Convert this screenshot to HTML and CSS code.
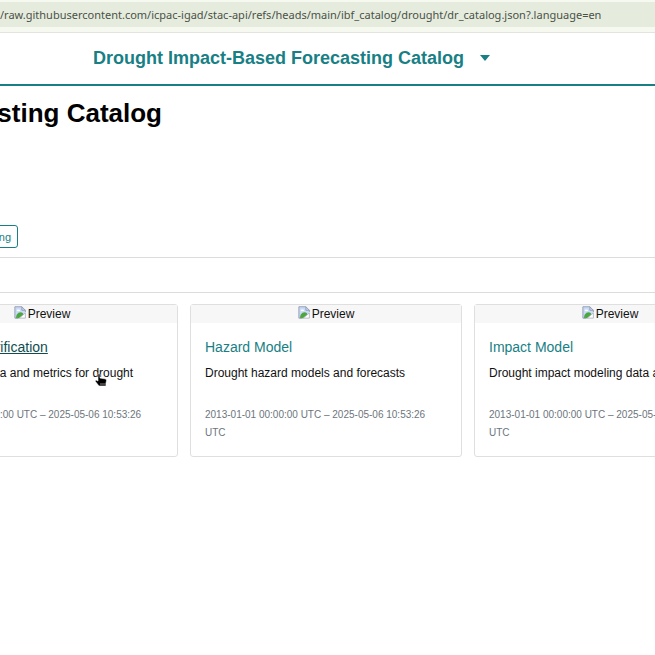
FILE: index.html
```
<!DOCTYPE html>
<html lang="en">
<head>
	<meta charset="utf-8">
	<title>Drought Impact-Based Forecasting Catalog</title>
	<link rel="stylesheet" href="styles.css">
</head>
<body>
	<svg class="defs" width="0" height="0">
		<symbol id="broken" viewBox="0 0 16 16">
			<path d="M1 2H9L13 6V9L6 15H1Z" fill="#c9dafa"/>
			<path d="M2 15L3 11Q6 7 10 9L11 11L6 15Z" fill="#4ca83e"/>
			<ellipse cx="5" cy="6" rx="2" ry="1" fill="#fff"/>
			<path d="M1 15V2H9L13 6V8M1 15H5M9 2V6H13" fill="none" stroke="#8f98a8"/>
			<path d="M13 9L6 15H13Z" fill="#fff" stroke="#b0b6c0"/>
		</symbol>
	</svg>

	<div class="toolbar">
		<input class="address" type="text" aria-label="Address" value="/raw.githubusercontent.com/icpac-igad/stac-api/refs/heads/main/ibf_catalog/drought/dr_catalog.json?.language=en">
	</div>

	<header>
		<a class="brand" href="#">Drought Impact-Based Forecasting Catalog</a>
		<button class="toggle" type="button" aria-label="More"><svg width="10" height="6" viewBox="0 0 10 6"><path d="M0 0H10L5 6Z" fill="currentColor"/></svg></button>
	</header>

	<main>
		<h1>Drought Impact-Based Forecasting Catalog</h1>
		<div class="keywords"><button type="button">forecasting</button></div>
		<div class="filters"></div>

		<div class="cards">
			<article class="card hover">
				<div class="preview"><svg width="14" height="14"><use href="#broken"/></svg>Preview</div>
				<div class="card-body">
					<h2><a href="#">Forecast Verification</a></h2>
					<p>Verification data and metrics for drought</p>
					<small>2013-01-01 00:00:00 UTC – 2025-05-06 10:53:26 UTC</small>
				</div>
				<svg class="pointer" width="13" height="14" viewBox="0 0 13 14"><path d="M3 1Q4 0 5 1V5L11 6Q12 7 11 10V13H4L0 8L1 7L3 8Z" fill="#000" stroke="#fff" stroke-width=".6"/><path d="M5 11H11" stroke="#888"/></svg>
			</article>
			<article class="card">
				<div class="preview"><svg width="14" height="14"><use href="#broken"/></svg>Preview</div>
				<div class="card-body">
					<h2><a href="#">Hazard Model</a></h2>
					<p>Drought hazard models and forecasts</p>
					<small>2013-01-01 00:00:00 UTC – 2025-05-06 10:53:26 UTC</small>
				</div>
			</article>
			<article class="card">
				<div class="preview"><svg width="14" height="14"><use href="#broken"/></svg>Preview</div>
				<div class="card-body">
					<h2><a href="#">Impact Model</a></h2>
					<p>Drought impact modeling data and</p>
					<small>2013-01-01 00:00:00 UTC – 2025-05-06 10:53:26 UTC</small>
				</div>
			</article>
		</div>
	</main>
</body>
</html>
```

FILE: styles.css
```
* { box-sizing: border-box; }
html { background-color: #fff; }
body { margin: 0; overflow-x: hidden; font: 12px/18px "Liberation Sans", Arial, sans-serif; color: #111; }
main { overflow: hidden; }
a { color: #188085; text-decoration: none; }
.defs { position: absolute; }

.toolbar { padding: 2px 0 5px; background-color: #f5f9ef; border-bottom: 1px solid #e2e4df; }
.address { display: block; width: 100%; height: 25px; padding: 0; border: none; background-color: #e5ecdd; color: #4b5148; font: 11px "Noto Sans", sans-serif; }

header { display: flex; align-items: center; gap: 16px; height: 53px; padding: 0 0 2px 93px; border-bottom: 2px solid #188085; }
.brand { font-size: 18px; font-weight: bold; line-height: 24px; }
.toggle { display: flex; padding: 0; border: none; background: none; color: #188085; }

/* heading and keywords run off the left edge */
h1, .keywords { display: flex; justify-content: flex-end; white-space: nowrap; }
h1 { width: 162px; margin: 11px 0 96px; font-size: 26px; line-height: 32px; color: #000; }
.keywords { width: 18px; }
.keywords button { flex: none; height: 23px; padding: 0 6px; border: 1px solid #188085; border-radius: 3px; background: none; color: #188085; font: 11px "Liberation Sans", Arial, sans-serif; }
.filters { height: 36px; margin: 9px 0 11px; border: solid #dcdcdc; border-width: 1px 0; }

.cards { display: grid; grid-template-columns: repeat(3, 1fr); gap: 12px; margin: 0 -91px 0 -94px; }
.card { position: relative; border: 1px solid #dfdfdf; border-radius: 3px; }
.preview { display: flex; justify-content: center; background-color: #f7f7f7; }
.card-body { padding: 14px; }
.card h2 { margin: 0 0 7px; font-size: 14px; font-weight: normal; line-height: 20px; }
.card p { margin: 0 0 24px; white-space: nowrap; }
.card small { display: block; font-size: 10px; color: #6c757d; }
.hover h2 a { color: #0f4d50; text-decoration: underline; }
.pointer { position: absolute; left: 188px; top: 68px; }
```
